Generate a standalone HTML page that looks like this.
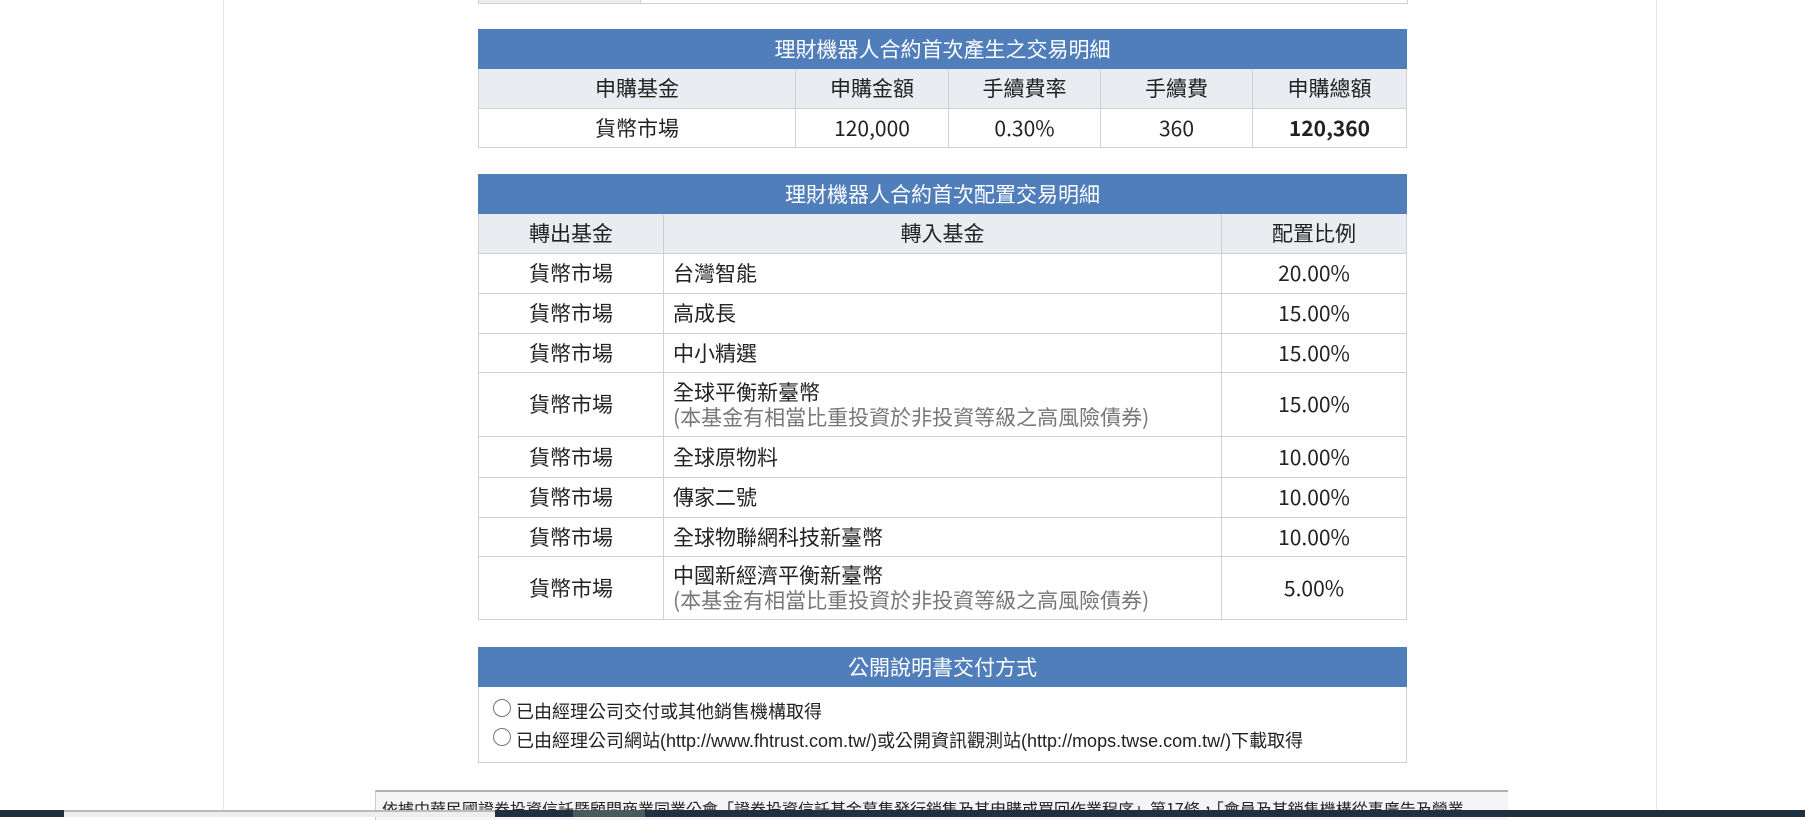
<!DOCTYPE html>
<html><head><meta charset="utf-8"><style>
body{margin:0;width:1805px;height:817px;overflow:hidden;background:#fff;font-family:"Noto Sans CJK TC","Liberation Sans",sans-serif;color:#222;position:relative}
.wrap{position:absolute;left:223px;top:0;width:1432px;height:817px;border-left:1px solid #e6e6e6;border-right:1px solid #e6e6e6}
table{position:absolute;left:478px;width:929px;border-collapse:collapse;font-size:21px}
td,th{border:1px solid #d0d0d0;text-align:center;font-weight:normal;padding:0;line-height:25px}
.h td{background:#4f7ebb;color:#fff;border-color:#4f7ebb}
.g td{background:#e9ecf1}
.l{text-align:left;padding-left:9px}
.s{color:#777}
</style></head><body>
<div class="wrap"></div>
<div style="position:absolute;left:478px;top:0;width:928px;height:3px;border:1px solid #d0d0d0;border-top:none"><div style="position:absolute;left:0;top:0;width:161px;height:3px;background:#e9ecf1;border-right:1px solid #d0d0d0"></div></div>
<table style="top:29px">
<tr class="h" style="height:39px"><td colspan="5">理財機器人合約首次產生之交易明細</td></tr>
<tr class="g" style="height:40px"><td style="width:316px">申購基金</td><td style="width:152px">申購金額</td><td style="width:151px">手續費率</td><td style="width:151px">手續費</td><td>申購總額</td></tr>
<tr style="height:39px"><td>貨幣市場</td><td>120,000</td><td>0.30%</td><td>360</td><td><b>120,360</b></td></tr>
</table>
<table style="top:174px">
<tr class="h" style="height:39px"><td colspan="3">理財機器人合約首次配置交易明細</td></tr>
<tr class="g" style="height:40px"><td style="width:184px">轉出基金</td><td style="width:557px">轉入基金</td><td>配置比例</td></tr>
<tr style="height:40px"><td>貨幣市場</td><td class="l">台灣智能</td><td>20.00%</td></tr>
<tr style="height:40px"><td>貨幣市場</td><td class="l">高成長</td><td>15.00%</td></tr>
<tr style="height:39px"><td>貨幣市場</td><td class="l">中小精選</td><td>15.00%</td></tr>
<tr style="height:64px"><td>貨幣市場</td><td class="l" style="line-height:25px">全球平衡新臺幣<br><span class="s">(本基金有相當比重投資於非投資等級之高風險債券)</span></td><td>15.00%</td></tr>
<tr style="height:41px"><td>貨幣市場</td><td class="l">全球原物料</td><td>10.00%</td></tr>
<tr style="height:40px"><td>貨幣市場</td><td class="l">傳家二號</td><td>10.00%</td></tr>
<tr style="height:39px"><td>貨幣市場</td><td class="l">全球物聯網科技新臺幣</td><td>10.00%</td></tr>
<tr style="height:63px"><td>貨幣市場</td><td class="l" style="line-height:25px">中國新經濟平衡新臺幣<br><span class="s">(本基金有相當比重投資於非投資等級之高風險債券)</span></td><td>5.00%</td></tr>
</table>
<table style="top:647px">
<tr class="h" style="height:39px"><td>公開說明書交付方式</td></tr>
<tr style="height:76px"><td class="l" style="font-family:'Liberation Sans','Noto Sans CJK TC',sans-serif;font-size:18px;line-height:29px;padding-left:14px;padding-top:4px">
<span style="display:inline-block;width:16px;height:16px;border:1px solid #777;border-radius:50%;vertical-align:1px;margin-right:5px"></span>已由經理公司交付或其他銷售機構取得<br>
<span style="display:inline-block;width:16px;height:16px;border:1px solid #777;border-radius:50%;vertical-align:1px;margin-right:5px"></span>已由經理公司網站(http://www.fhtrust.com.tw/)或公開資訊觀測站(http://mops.twse.com.tw/)下載取得</td></tr>
</table>
<div style="position:absolute;left:375px;top:790px;width:1133px;height:30px;background:#f5f4f6;border-top:2px solid #b0b0b0;border-left:1px solid #ccc;overflow:hidden;font-size:16px;white-space:nowrap;padding:6px 6px;box-sizing:border-box;line-height:20px">依據中華民國證券投資信託暨顧問商業同業公會「證券投資信託基金募集發行銷售及其申購或買回作業程序」第17條，「會員及其銷售機構從事廣告及營業</div>
<div style="position:absolute;left:0;top:810px;width:1805px;height:7px;background:#1f3040"></div>
<div style="position:absolute;left:64px;top:810px;width:431px;height:7px;background:#eeeeee;border-top:2px solid #bbb;box-sizing:border-box"></div>
<div style="position:absolute;left:573px;top:810px;width:72px;height:7px;background:#4a5a5f"></div>
</body></html>
